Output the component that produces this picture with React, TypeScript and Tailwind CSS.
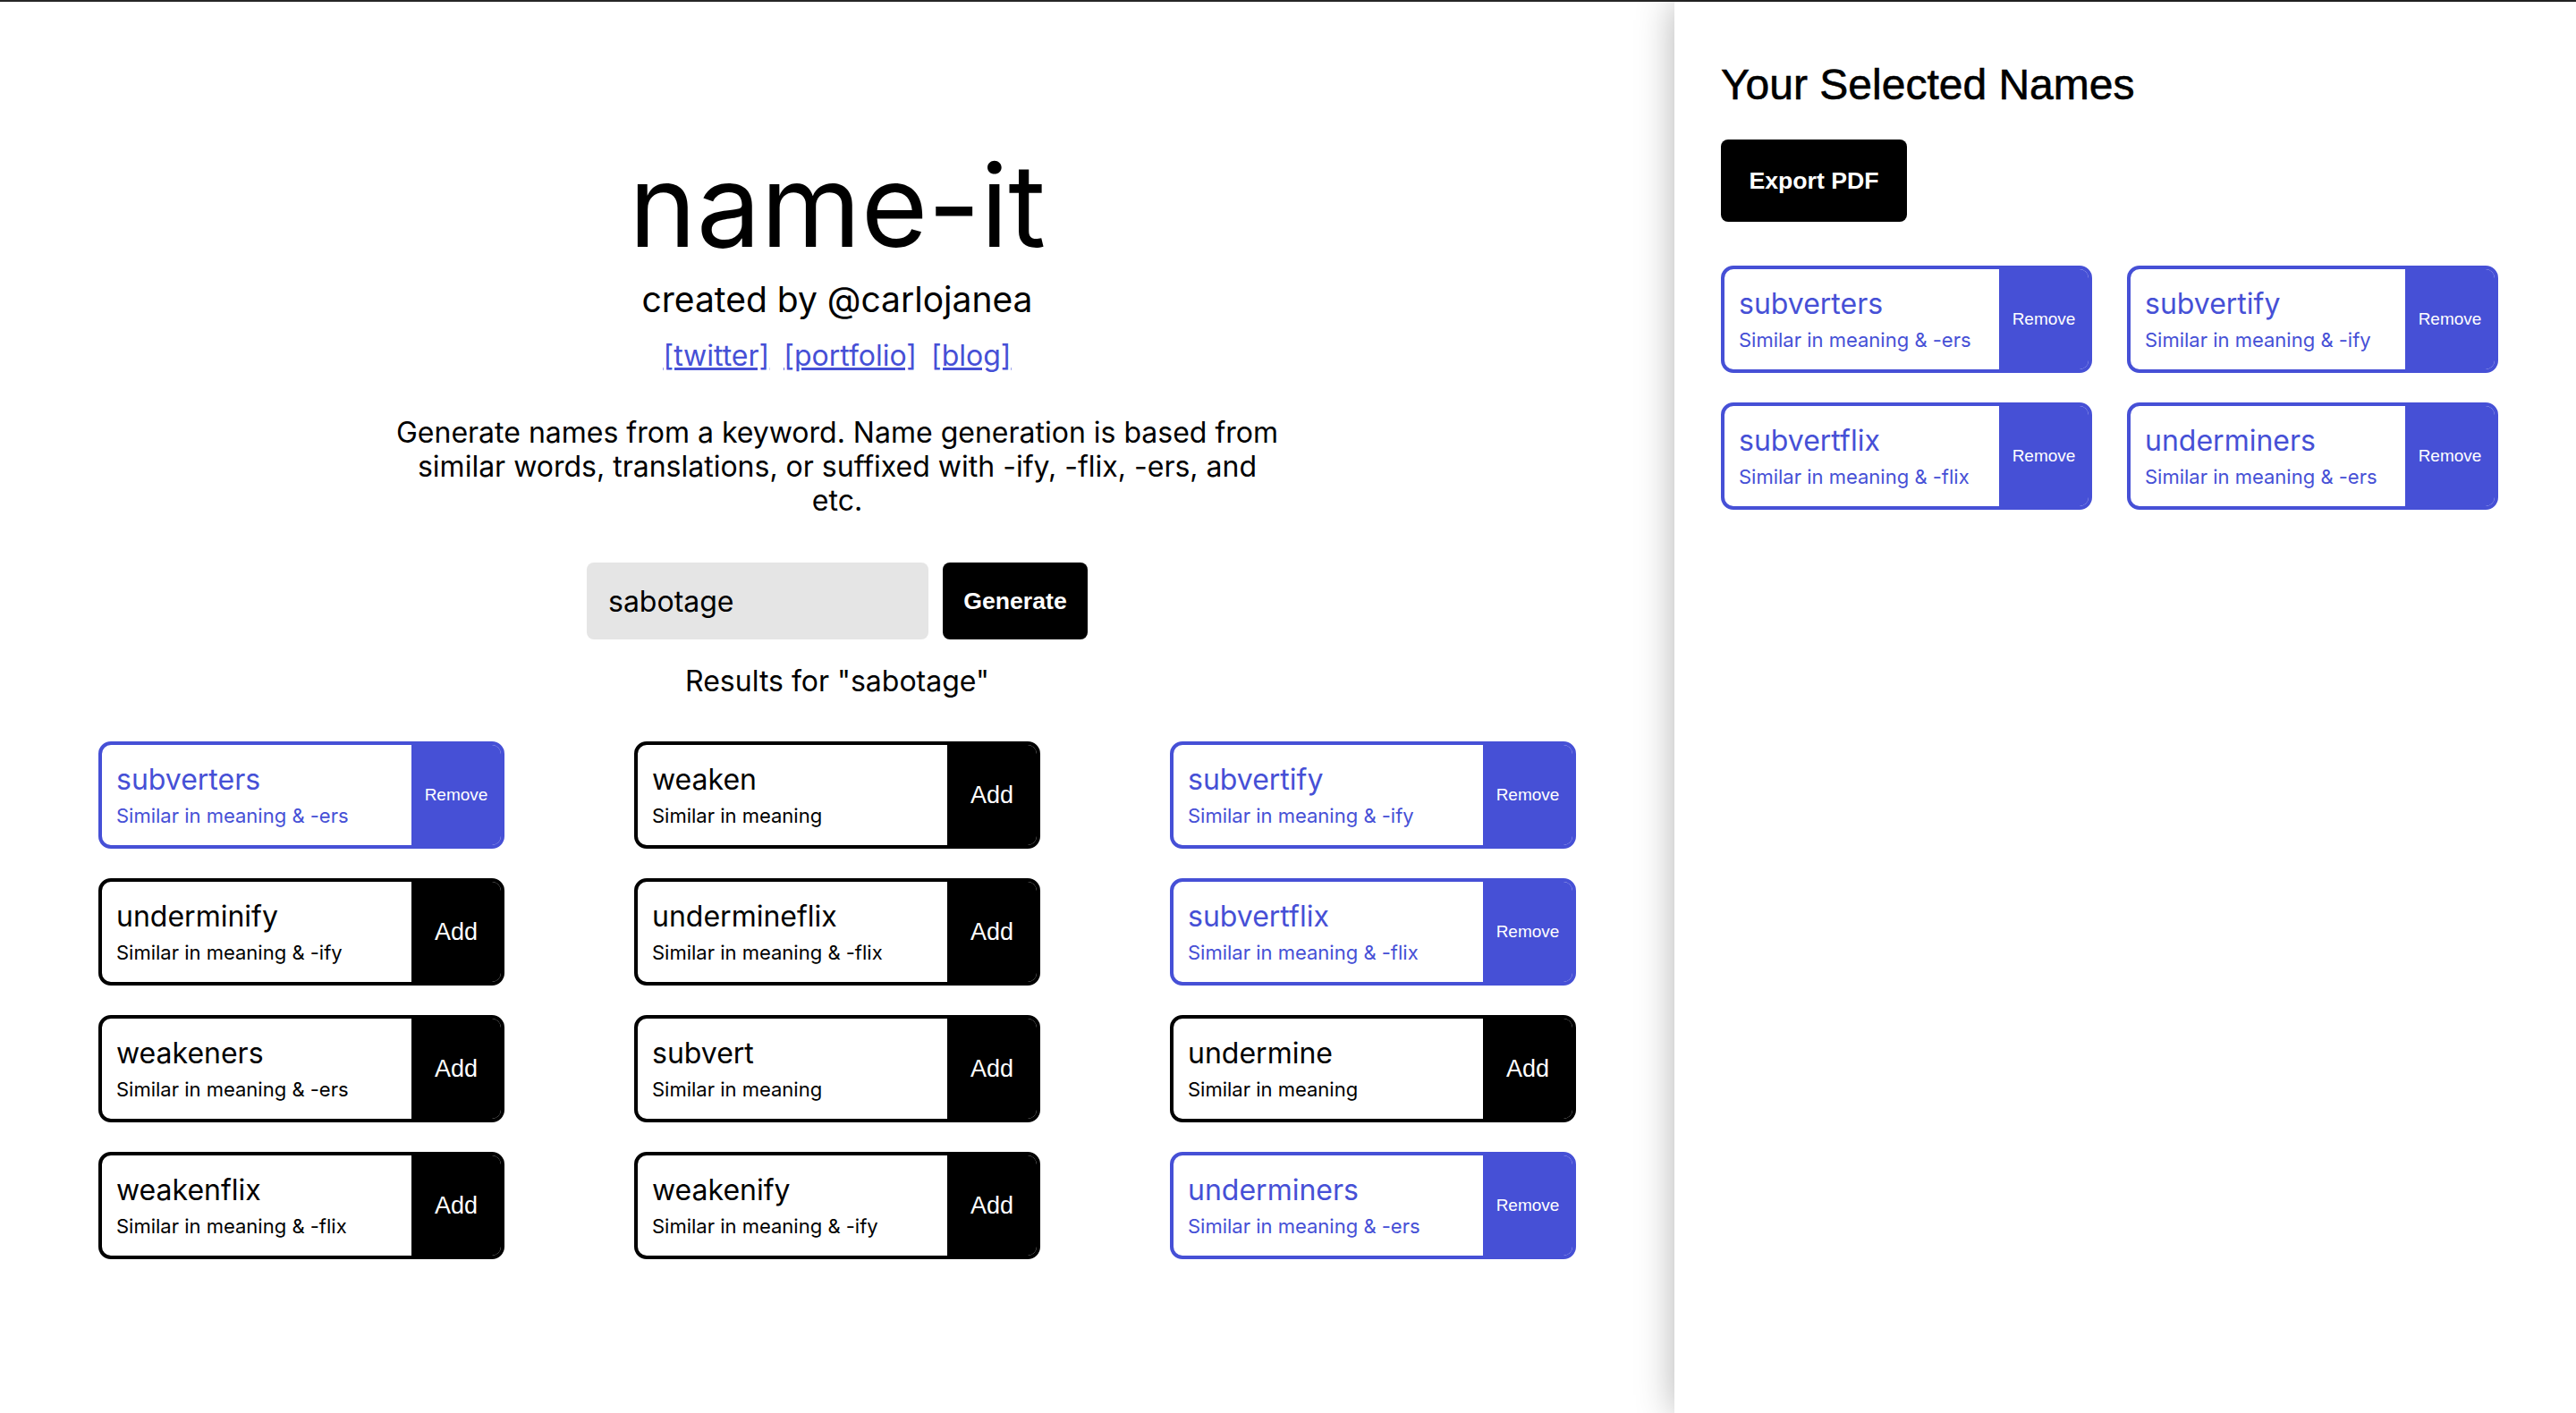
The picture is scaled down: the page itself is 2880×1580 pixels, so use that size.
import { useState } from "react";

type Result = {
  name: string;
  desc: string;
};

const results: Result[] = [
  { name: "subverters", desc: "Similar in meaning & -ers" },
  { name: "weaken", desc: "Similar in meaning" },
  { name: "subvertify", desc: "Similar in meaning & -ify" },
  { name: "underminify", desc: "Similar in meaning & -ify" },
  { name: "undermineflix", desc: "Similar in meaning & -flix" },
  { name: "subvertflix", desc: "Similar in meaning & -flix" },
  { name: "weakeners", desc: "Similar in meaning & -ers" },
  { name: "subvert", desc: "Similar in meaning" },
  { name: "undermine", desc: "Similar in meaning" },
  { name: "weakenflix", desc: "Similar in meaning & -flix" },
  { name: "weakenify", desc: "Similar in meaning & -ify" },
  { name: "underminers", desc: "Similar in meaning & -ers" },
];

function NameCard({
  item,
  selected,
  onToggle,
  wide,
}: {
  item: Result;
  selected: boolean;
  onToggle: () => void;
  wide?: boolean;
}) {
  return (
    <div
      className={`flex h-[120px] overflow-hidden rounded-[14px] border-4 bg-white ${
        wide ? "w-[454px]" : "w-[415px]"
      } ${selected ? "border-[#4650d6]" : "border-black"}`}
    >
      <div className="flex min-w-0 flex-1 flex-col justify-center gap-[13px] pl-4 font-[Inter,sans-serif]">
        <p className={`text-[32px] leading-none ${selected ? "text-[#4650d6]" : "text-black"}`}>{item.name}</p>
        <p className={`text-[22px] leading-none ${selected ? "text-[#4650d6]" : "text-black"}`}>{item.desc}</p>
      </div>
      <button
        type="button"
        onClick={onToggle}
        className={`flex w-[100px] shrink-0 items-center justify-center font-['Liberation_Sans',Arial,sans-serif] text-white ${
          selected ? "bg-[#4650d6] text-[19px]" : "bg-black text-[27px]"
        }`}
      >
        {selected ? "Remove" : "Add"}
      </button>
    </div>
  );
}

export default function App() {
  const [keyword, setKeyword] = useState("sabotage");
  const [selected, setSelected] = useState<string[]>(["subverters", "subvertify", "subvertflix", "underminers"]);

  const toggle = (name: string) => {
    setSelected((prev) => (prev.includes(name) ? prev.filter((n) => n !== name) : [...prev, name]));
  };

  const picked = selected
    .map((n) => results.find((r) => r.name === n))
    .filter((r): r is Result => Boolean(r));

  return (
    <div className="flex h-screen flex-col overflow-hidden bg-white text-black">
      <div className="h-[2px] shrink-0 bg-[#262626]" />
      <div className="flex min-h-0 flex-1">
        <main className="flex w-[65%] flex-col items-center font-[Inter,sans-serif]">
          <h1 className="mt-[164px] text-[128px] leading-none font-normal">name-it</h1>
          <p className="mt-[21px] text-[39px] leading-none">created by @carlojanea</p>
          <div className="mt-[28px] flex gap-[16px] text-[32px] leading-none text-[#4650d6]">
            <a href="#" className="underline">[twitter]</a>
            <a href="#" className="underline">[portfolio]</a>
            <a href="#" className="underline">[blog]</a>
          </div>
          <p className="mt-[51px] max-w-[992px] text-center text-[32px] leading-[38px]">
            Generate names from a keyword. Name generation is based from similar words, translations, or suffixed with -ify, -flix, -ers, and etc.
          </p>
          <div className="mt-[50px] flex gap-4">
            <input
              value={keyword}
              onChange={(e) => setKeyword(e.target.value)}
              className="h-[86px] w-[382px] rounded-lg bg-[#e5e5e5] px-6 text-[32px] outline-none"
            />
            <button
              type="button"
              className="h-[86px] w-[162px] rounded-lg bg-black font-['Liberation_Sans',Arial,sans-serif] text-[26.67px] font-bold text-white"
            >
              Generate
            </button>
          </div>
          <p className="mt-[31px] text-[32px] leading-none">Results for "sabotage"</p>
          <div className="mt-[51px] grid grid-cols-[454px_454px_454px] gap-x-[145px] gap-y-[33px]">
            {results.map((r) => (
              <NameCard key={r.name} item={r} wide selected={selected.includes(r.name)} onToggle={() => toggle(r.name)} />
            ))}
          </div>
        </main>
        <aside className="w-[35%] bg-white pl-[52px] shadow-[0_0_40px_rgba(0,0,0,0.3)]">
          <h2 className="mt-[69px] font-['Liberation_Sans',Arial,sans-serif] text-[48px] leading-none [-webkit-text-stroke:0.6px_black]">
            Your Selected Names
          </h2>
          <button
            type="button"
            className="mt-[37px] h-[92px] w-[208px] rounded-lg bg-black font-['Liberation_Sans',Arial,sans-serif] text-[26.67px] font-bold text-white"
          >
            Export PDF
          </button>
          <div className="mt-[49px] grid grid-cols-[415px_415px] gap-x-[39px] gap-y-[33px]">
            {picked.map((r) => (
              <NameCard key={r.name} item={r} selected onToggle={() => toggle(r.name)} />
            ))}
          </div>
        </aside>
      </div>
    </div>
  );
}
